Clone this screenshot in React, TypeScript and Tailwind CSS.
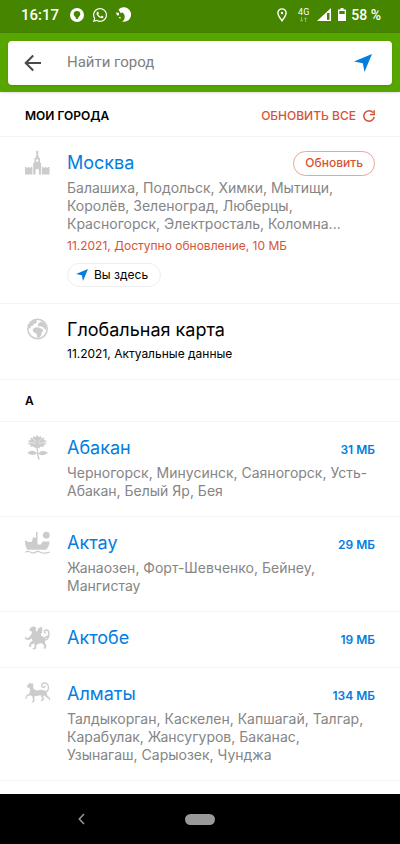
import type { ReactNode } from "react";
import { FaWhatsapp } from "react-icons/fa";

const KremlinIcon = () => (
	<svg viewBox="0 0 25 25" className="w-[25px] h-[25px]" fill="currentColor" aria-hidden="true">
		<path d="M12.2 0l.6 1.400 1.500.1-1.200 1 .4 1.400-1.300-.8-1.300.8.4-1.400-1.200-1 1.500-.1z" />
		<path
			fillRule="evenodd"
			d="M11.700 3h1l1.300 5h1v4.800h1.200V24.500h-2.300V20.500a1.700 1.700 0 0 0-3.400 0v4H8.200V12.800h1.200V8h1zM12.200 9.300a1.300 1.300 0 1 0 0 2.600 1.300 1.300 0 0 0 0-2.600z"
		/>
		<path d="M0 17h1.800v.9h1.100V17h1.700v.9h1.100V17h1.700v7.500H0zM17 17h1.700v.9h1.100V17h1.700v.9h1.100V17h1.900v7.500H17z" />
	</svg>
);

const GlobeIcon = () => (
	<svg viewBox="0 0 25 25" className="w-[25px] h-[25px]" fill="currentColor" aria-hidden="true">
		<circle cx="12.500" cy="12" r="9.700" fill="none" stroke="currentColor" strokeWidth="1.500" />
		<path d="M3.500 12C3.500 7 7 3.500 11.500 3l.5 1.800-1.500 1.700-2 .4L8 8.500l-2 .8-.5 1.800zM13.500 6.500l2.500-2 3 1.500 2.500 4-.5 2.500-2-1-1-1.500-2-.7-1.500.2-1.800-.8z" />
		<path d="M10.500 10.500l3-.3 2.300 1.300 1.700.5.700 1.800-1.600 2-.5 2.700-2.300 2.500-1.600-.5-.5-3.700-2.500-1-1.600-2.300.7-2z" />
	</svg>
);

const FlowerIcon = () => (
	<svg viewBox="0 0 25 25" className="w-[25px] h-[25px]" fill="currentColor" aria-hidden="true">
		<path d="M12.300 0l1.500 1.900 2.600-1-.2 2.400 3.500-.6-1.300 2.400 3.900.8-2.700 1.700 2.500 1.400-3.300.8.300 1.900-3.200-.2-2.300 2-1.300-1.200-1.500 1.200-2.200-2-3.200.2.300-1.900-3.300-.8 2.600-1.400L2.500 5.900l3.700-.8-1.300-2.400 3.500.6-.3-2.400 2.700 1z" />
		<path d="M11.800 11h1.200c-.3 5 .2 9.300 1.900 13.300l-1.500.4c-1.600-4-1.900-8.500-1.600-13.700z" />
		<path d="M11.800 18.300c-1.800 2.300-6.500 2.300-9.300-.6 3.500-2.900 7.600-2.300 9.300.6zM13.300 18.600c1.200-3.100 6.200-3.600 9.500-.8-2.800 3-7.700 3.100-9.500.8z" />
		<path d="M4.500 7.300l6 1.400M20 7.300l-6 1.400M8 3.500l3 3.800M16.600 3.500l-3 3.800" stroke="#fff" strokeWidth=".5" />
	</svg>
);

const BoatIcon = () => (
	<svg viewBox="0 0 25 25" className="w-[25px] h-[25px]" fill="currentColor" aria-hidden="true">
		<circle cx="21.300" cy="5.200" r="3.400" />
		<path d="M11 2h1.500v12.500h3.300l1.900-3h6.900c-.3 3.300-1.400 6-3.400 8.300H2.400C.6 17.500 0 14 0 10.500l3.800 1.500 3-.2L8 7.500h3z" />
		<path
			d="M.2 22.300c2.200-1.600 3.700-1.200 5.500-.1 1.800 1.100 3.300 1 5-.1 1.600-1 3-1 4.700.1 2.300 1.400 5.500 1.300 9.300 0"
			fill="none"
			stroke="currentColor"
			strokeWidth="1.300"
		/>
	</svg>
);

const GriffinIcon = () => (
	<svg viewBox="0 0 25 25" className="w-[25px] h-[25px]" fill="currentColor" aria-hidden="true">
		<path d="M4 5l2-2.700 3-1 2.500 2-1 2.200 1.700 1.300C12.500 4 14 2 17 1.500l-.5 1.500 1.300.3-1 1.400 1 .6-1 1.300.6 1-1.400 1v2l3 1.600c1.700 1.500 1.700 4 .8 5.800l1.700 2.300-.6 3.200-2.700-.1.700-1.400.9-.5-2.800-3.200-3.700.4-1.800 1.300-.4 3.500-2 .9-1.800-.4.800-1 1.300-.5.200-4-2.500.5-1.300 1.800.7.900-1.700.4-1-1.300 1.500-3.500 2.200-1.600-.8-2.400-2 1.500-2.600.3L0 13.500.2 11l1.300 2 2.500-.5L6.500 9 7 6.700z" />
		<path
			d="M18.500 13.500c2-1.500 5.400-1.500 5.400-4.500 0-2-.7-4-2.700-4-2.200 0-2.300 3-.3 3M18.500 14.500c3.200 1.200 5-1.500 5.200-4"
			fill="none"
			stroke="currentColor"
			strokeWidth="1.500"
		/>
	</svg>
);

const LeopardIcon = () => (
	<svg viewBox="0 0 25 25" className="w-[25px] h-[25px]" fill="currentColor" aria-hidden="true">
		<path d="M2 5l1-1.500 1-.8.700-.9 1.200.6 2 .2.700 1.500-.7 1.700L9 8.300l3 1.200 4-.7 4 .7 1.700 2.500.5 2.500 2.800 2.500v2.700l-1.600-2.200-3.100-1.900-1.600-1.600-.5 2 1 1.800-1.200 2-2.500.2.800-1.300 1.300-1-1.500-2.200-.6-1.500-3.300 1-2.200-.3-.7 1.500.2 4.500-2.200.8-1 .2.800-1.500.9-.5-.5-4-1.700-1.500-3.200.8-1.100 2.500-1.900.5.900-1.300 1-2.500 3-1.700L5 9 4.500 6.700 2.500 6.800z" />
		<path
			d="M20 11.500c2.500-1 3.700-3 3.400-5.500-.2-3-2.400-4.200-4.500-4-2.300.3-3 2.700-1.600 3.900 1.500 1.200 3.200 0 2.600-1.400"
			fill="none"
			stroke="currentColor"
			strokeWidth="1.300"
		/>
	</svg>
);

const ArrowMark = ({ className }: { className: string }) => (
	<svg viewBox="0 0 18 18" className={className} fill="currentColor" aria-hidden="true">
		<path d="M18 0L10.500 18 8.800 9.300 0 7.500z" />
	</svg>
);

const StatusBar = () => (
	<div className="flex h-[33px] shrink-0 items-center justify-between bg-[#458500] pl-[21px] pr-[19px] pb-1 text-white">
		<div className="flex items-center gap-2">
			<span className="w-[41px] text-[15px] leading-[18px] font-medium">16:17</span>
			<svg viewBox="0 0 14 14" className="w-[14px] h-[14px]" aria-hidden="true">
				<circle cx="7" cy="7" r="7" fill="#fff" />
				<path d="M7 3a3.300 3.300 0 0 1 3.300 3.300C10.300 8 8 8.700 7.800 11H6.200C6 8.700 3.700 8 3.700 6.300A3.300 3.300 0 0 1 7 3z" fill="#458500" />
			</svg>
			<FaWhatsapp className="w-4 h-4" />
			<svg viewBox="0 0 15 15" className="w-[15px] h-[15px]" fill="#fff" aria-hidden="true">
				<path d="M2.500 2.500A7.300 7.300 0 1 1 6 14.600c2.500-1.200 3.500-4.600 2-7.600l-1.500-1.500-2 .5z" />
				<path d="M0 5.500l3 .2v2.600L1 8.500zM2.500 10h2.200l-.5 2z" />
			</svg>
		</div>
		<div className="flex items-center">
			<svg viewBox="0 0 10 14" className="mr-[11px] w-[10px] h-[14px]" fill="none" stroke="#fff" strokeWidth="1.400" aria-hidden="true">
				<path d="M5 12.800C3 10 .9 7.500.9 5a4.100 4.100 0 0 1 8.200 0c0 2.500-2.100 5-4.100 7.800z" />
				<circle cx="5" cy="5" r="1.200" fill="#fff" stroke="none" />
			</svg>
			<div className="mr-2 flex flex-col items-center">
				<span className="text-[9px] leading-[9px]">4G</span>
				<svg viewBox="0 0 9 5" className="w-[9px] h-[5px]" fill="none" stroke="#a3c480" strokeWidth=".8" aria-hidden="true">
					<path d="M2.500 0v4M1 2.800l1.500 1.500L4 2.800M6.500 5V1M5 2.200L6.500.7 8 2.200" />
				</svg>
			</div>
			<svg viewBox="0 0 14 13" className="mr-[7px] w-[14px] h-[13px]" aria-hidden="true">
				<path d="M14 0v13H0z" fill="#fff" />
				<path d="M10 5h2.500v6.800H10z" fill="#458500" />
			</svg>
			<svg viewBox="0 0 8 13" className="mr-[5px] w-2 h-[13px]" aria-hidden="true">
				<path d="M2.500 0h3v1.500H8V13H0V1.500h2.500z" fill="#fff" />
				<path d="M1.300 3h5.400v3H1.300z" fill="#458500" />
			</svg>
			<span className="text-sm leading-[18px] font-medium">58 %</span>
		</div>
	</div>
);

const SearchBar = () => (
	<div className="z-10 shrink-0 bg-[#57a600] px-2 pt-2 pb-[7px] shadow">
		<div className="flex h-11 items-center rounded-sm bg-white pl-4 pr-5 shadow">
			<button type="button" aria-label="Назад" className="mr-[25px] text-[#4a4a4a]">
				<svg viewBox="0 0 18 18" className="w-[18px] h-[18px]" fill="none" stroke="currentColor" strokeWidth="2" aria-hidden="true">
					<path d="M17 9H1.800M9.200 1.500L1.700 9l7.500 7.500" />
				</svg>
			</button>
			<input
				type="text"
				aria-label="Найти город"
				placeholder="Найти город"
				className="min-w-0 flex-1 pb-0.5 text-[15px] outline-none placeholder:text-[#808080]"
			/>
			<button type="button" aria-label="Моё местоположение" className="text-[#057ddf]">
				<ArrowMark className="w-[18px] h-[18px]" />
			</button>
		</div>
	</div>
);

type RowProps = {
	icon: ReactNode;
	name: string;
	towns?: string;
	aside?: ReactNode;
	dark?: boolean;
	children?: ReactNode;
};

const Row = ({ icon, name, towns, aside, dark, children }: RowProps) => (
	<li className="flex gap-[17px] border-b border-[#f3f3f3] pt-[13px] pb-4 px-[25px]">
		<div className="w-[25px] shrink-0 text-[#cccccc]">{icon}</div>
		<div className="min-w-0 flex-1">
			<div className="flex h-[26px] items-center justify-between">
				{dark ? (
					<h2 className="text-lg leading-[26px] text-black">{name}</h2>
				) : (
					<a href="#" className="text-lg leading-[26px] text-[#057ddf]">
						{name}
					</a>
				)}
				{aside}
			</div>
			{towns && <p className="mt-[3px] pr-1 text-sm leading-[18px] text-[#858585]">{towns}</p>}
			{children}
		</div>
	</li>
);

const Size = ({ children }: { children: ReactNode }) => (
	<span className="pt-1 text-xs font-semibold text-[#057ddf]">{children}</span>
);

const cities = [
	{
		name: "Абакан",
		size: "31 МБ",
		icon: <FlowerIcon />,
		towns: "Черногорск, Минусинск, Саяногорск, Усть-Абакан, Белый Яр, Бея",
	},
	{
		name: "Актау",
		size: "29 МБ",
		icon: <BoatIcon />,
		towns: "Жанаозен, Форт-Шевченко, Бейнеу, Мангистау",
	},
	{ name: "Актобе", size: "19 МБ", icon: <GriffinIcon /> },
	{
		name: "Алматы",
		size: "134 МБ",
		icon: <LeopardIcon />,
		towns: "Талдыкорган, Каскелен, Капшагай, Талгар, Карабулак, Жансугуров, Баканас, Узынагаш, Сарыозек, Чунджа",
	},
];

export default function App() {
	return (
		<div className="flex h-screen flex-col bg-white font-['Roboto',sans-serif]">
			<StatusBar />
			<SearchBar />

			<main className="min-h-0 flex-1 overflow-hidden font-['Inter',sans-serif]">
				{/* my cities */}
				<div className="flex h-[45px] items-center justify-between border-b border-[#f3f3f3] pt-1 px-[25px]">
					<h1 className="text-xs font-semibold text-black">МОИ ГОРОДА</h1>
					<button type="button" className="flex items-center gap-[7px] text-xs font-medium text-[#d65435]">
						ОБНОВИТЬ ВСЕ
						<svg viewBox="0 0 12 12" className="w-3 h-3" fill="none" stroke="currentColor" strokeWidth="1.500" aria-hidden="true">
							<path d="M11.200 6.800A5.200 5.200 0 1 1 10 2.600M11.200.3v4.200H7" />
						</svg>
					</button>
				</div>
				<ul>
					<Row
						icon={<KremlinIcon />}
						name="Москва"
						towns="Балашиха, Подольск, Химки, Мытищи, Королёв, Зеленоград, Люберцы, Красногорск, Электросталь, Коломна..."
						aside={
							<button
								type="button"
								className="h-[25px] rounded-full border border-[#e8a797] px-[11px] text-xs font-medium text-[#d65435]"
							>
								Обновить
							</button>
						}
					>
						<p className="mt-1 text-xs leading-[18px] text-[#d65435]">11.2021, Доступно обновление, 10 МБ</p>
						<div className="mt-2 inline-flex h-6 items-center gap-[6px] rounded-full border border-[#eeeeee] pl-2 pr-3 text-xs text-black">
							<ArrowMark className="w-3 h-3 text-[#057ddf]" />
							Вы здесь
						</div>
					</Row>
					<Row icon={<GlobeIcon />} name="Глобальная карта" dark>
						<p className="mt-0.5 text-xs leading-[18px] text-black">11.2021, Актуальные данные</p>
					</Row>
				</ul>

				{/* all cities */}
				<h2 className="flex h-[42px] items-center border-b border-[#f3f3f3] px-[25px] text-xs font-semibold text-black">А</h2>
				<ul>
					{cities.map((city) => (
						<Row
							key={city.name}
							icon={city.icon}
							name={city.name}
							towns={city.towns}
							aside={<Size>{city.size}</Size>}
						/>
					))}
				</ul>
			</main>

			<nav className="grid h-[50px] shrink-0 grid-cols-3 items-center bg-black text-[#999999]">
				<button type="button" aria-label="Назад" className="ml-[78px]">
					<svg viewBox="0 0 7 12" className="w-[7px] h-[12px]" fill="none" stroke="currentColor" strokeWidth="1.500" aria-hidden="true">
						<path d="M6 1L1.300 6 6 11" />
					</svg>
				</button>
				<button type="button" aria-label="Домой" className="h-[11px] w-[30px] justify-self-center rounded-full bg-[#999999]" />
			</nav>
		</div>
	);
}
